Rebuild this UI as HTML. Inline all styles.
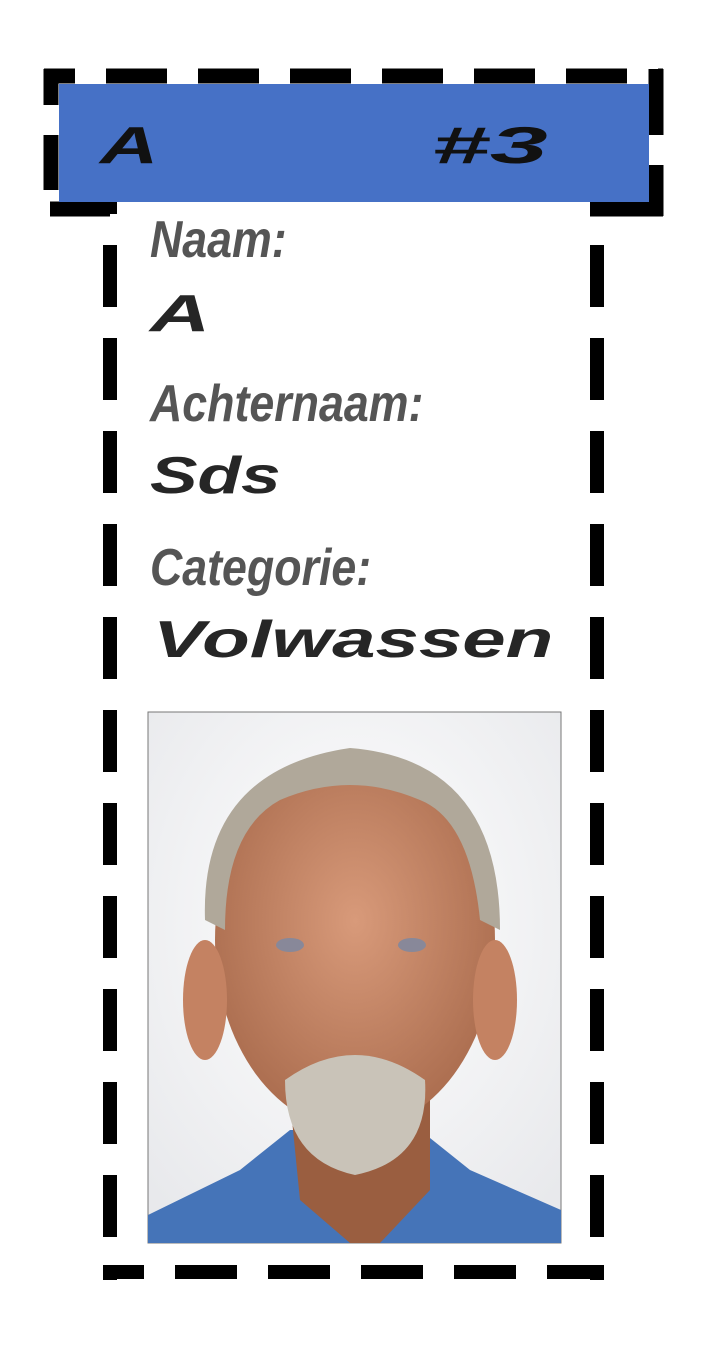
<!DOCTYPE html>
<html><head><style>
html,body{margin:0;padding:0;background:#fff;width:709px;height:1358px;overflow:hidden;position:relative}
.t{position:absolute;font-family:"Liberation Sans",sans-serif;font-weight:bold;font-style:italic;white-space:nowrap;transform-origin:left top}
.lab{color:#555;font-size:52px;transform:scaleX(0.86)}
.val{color:#262626;font-size:52px}
</style></head><body>
<svg width="709" height="1358" style="position:absolute;left:0;top:0">
<g stroke="#000" stroke-width="14" fill="none">
<line x1="110" y1="1280" x2="110" y2="200" stroke-dasharray="62 31" stroke-dashoffset="50"/>
<line x1="103" y1="1272" x2="604" y2="1272" stroke-dasharray="62 31" stroke-dashoffset="21"/>
<line x1="597" y1="1280" x2="597" y2="202" stroke-dasharray="62 31" stroke-dashoffset="50"/>
</g>
<g stroke="#000" stroke-width="15" fill="none">
<line x1="44" y1="76" x2="663" y2="76" stroke-dasharray="61 31" stroke-dashoffset="30"/>
<line x1="51" y1="69" x2="51" y2="216" stroke-dasharray="36 30 55 40"/>
<line x1="656" y1="69" x2="656" y2="216" stroke-dasharray="66 30 60"/>
<line x1="44" y1="209" x2="663" y2="209" stroke-dasharray="0 6 60 480 80"/>
</g>
<rect x="59" y="84" width="590" height="118" fill="#4671c6"/>
<defs>
<radialGradient id="bg" cx="0.5" cy="0.4" r="0.7"><stop offset="0" stop-color="#fff"/><stop offset="1" stop-color="#e8e9ec"/></radialGradient>
<radialGradient id="sk" cx="0.5" cy="0.45" r="0.6"><stop offset="0" stop-color="#d89a7a"/><stop offset="1" stop-color="#a86a4c"/></radialGradient>
</defs>
<rect x="148" y="712" width="413" height="531" fill="url(#bg)" stroke="#777" stroke-width="1"/>
<path d="M148 1215 L240 1170 L290 1130 L420 1130 L470 1170 L561 1210 L561 1243 L148 1243Z" fill="#4574b8"/>
<path d="M290 1100 L300 1200 L350 1243 L380 1243 L430 1190 L430 1100Z" fill="#9a5e40"/>
<ellipse cx="355" cy="940" rx="140" ry="190" fill="url(#sk)"/>
<ellipse cx="205" cy="1000" rx="22" ry="60" fill="#c48262"/>
<ellipse cx="495" cy="1000" rx="22" ry="60" fill="#c48262"/>
<path d="M205 920 Q200 770 350 748 Q500 760 500 930 L480 920 Q470 820 420 800 Q350 770 280 800 Q225 830 225 930Z" fill="#b0a89a"/>
<path d="M285 1080 Q355 1030 425 1080 Q430 1160 355 1175 Q285 1160 285 1080Z" fill="#c9c3b8"/>
<ellipse cx="290" cy="945" rx="14" ry="7" fill="#889"/>
<ellipse cx="412" cy="945" rx="14" ry="7" fill="#889"/>
</svg>
<div class="t val" style="left:100px;top:116px;color:#111;transform:scaleX(1.55)">A</div>
<div class="t val" style="left:432px;top:116px;color:#111;transform:scaleX(2.0)">#3</div>
<div class="t lab" style="left:150px;top:210px">Naam:</div>
<div class="t val" style="left:150px;top:284px;transform:scaleX(1.6)">A</div>
<div class="t lab" style="left:150px;top:374px">Achternaam:</div>
<div class="t val" style="left:150px;top:446px;transform:scaleX(1.37)">Sds</div>
<div class="t lab" style="left:150px;top:538px">Categorie:</div>
<div class="t val" style="left:153px;top:610px;transform:scaleX(1.5)">Volwassen</div>
</body></html>
